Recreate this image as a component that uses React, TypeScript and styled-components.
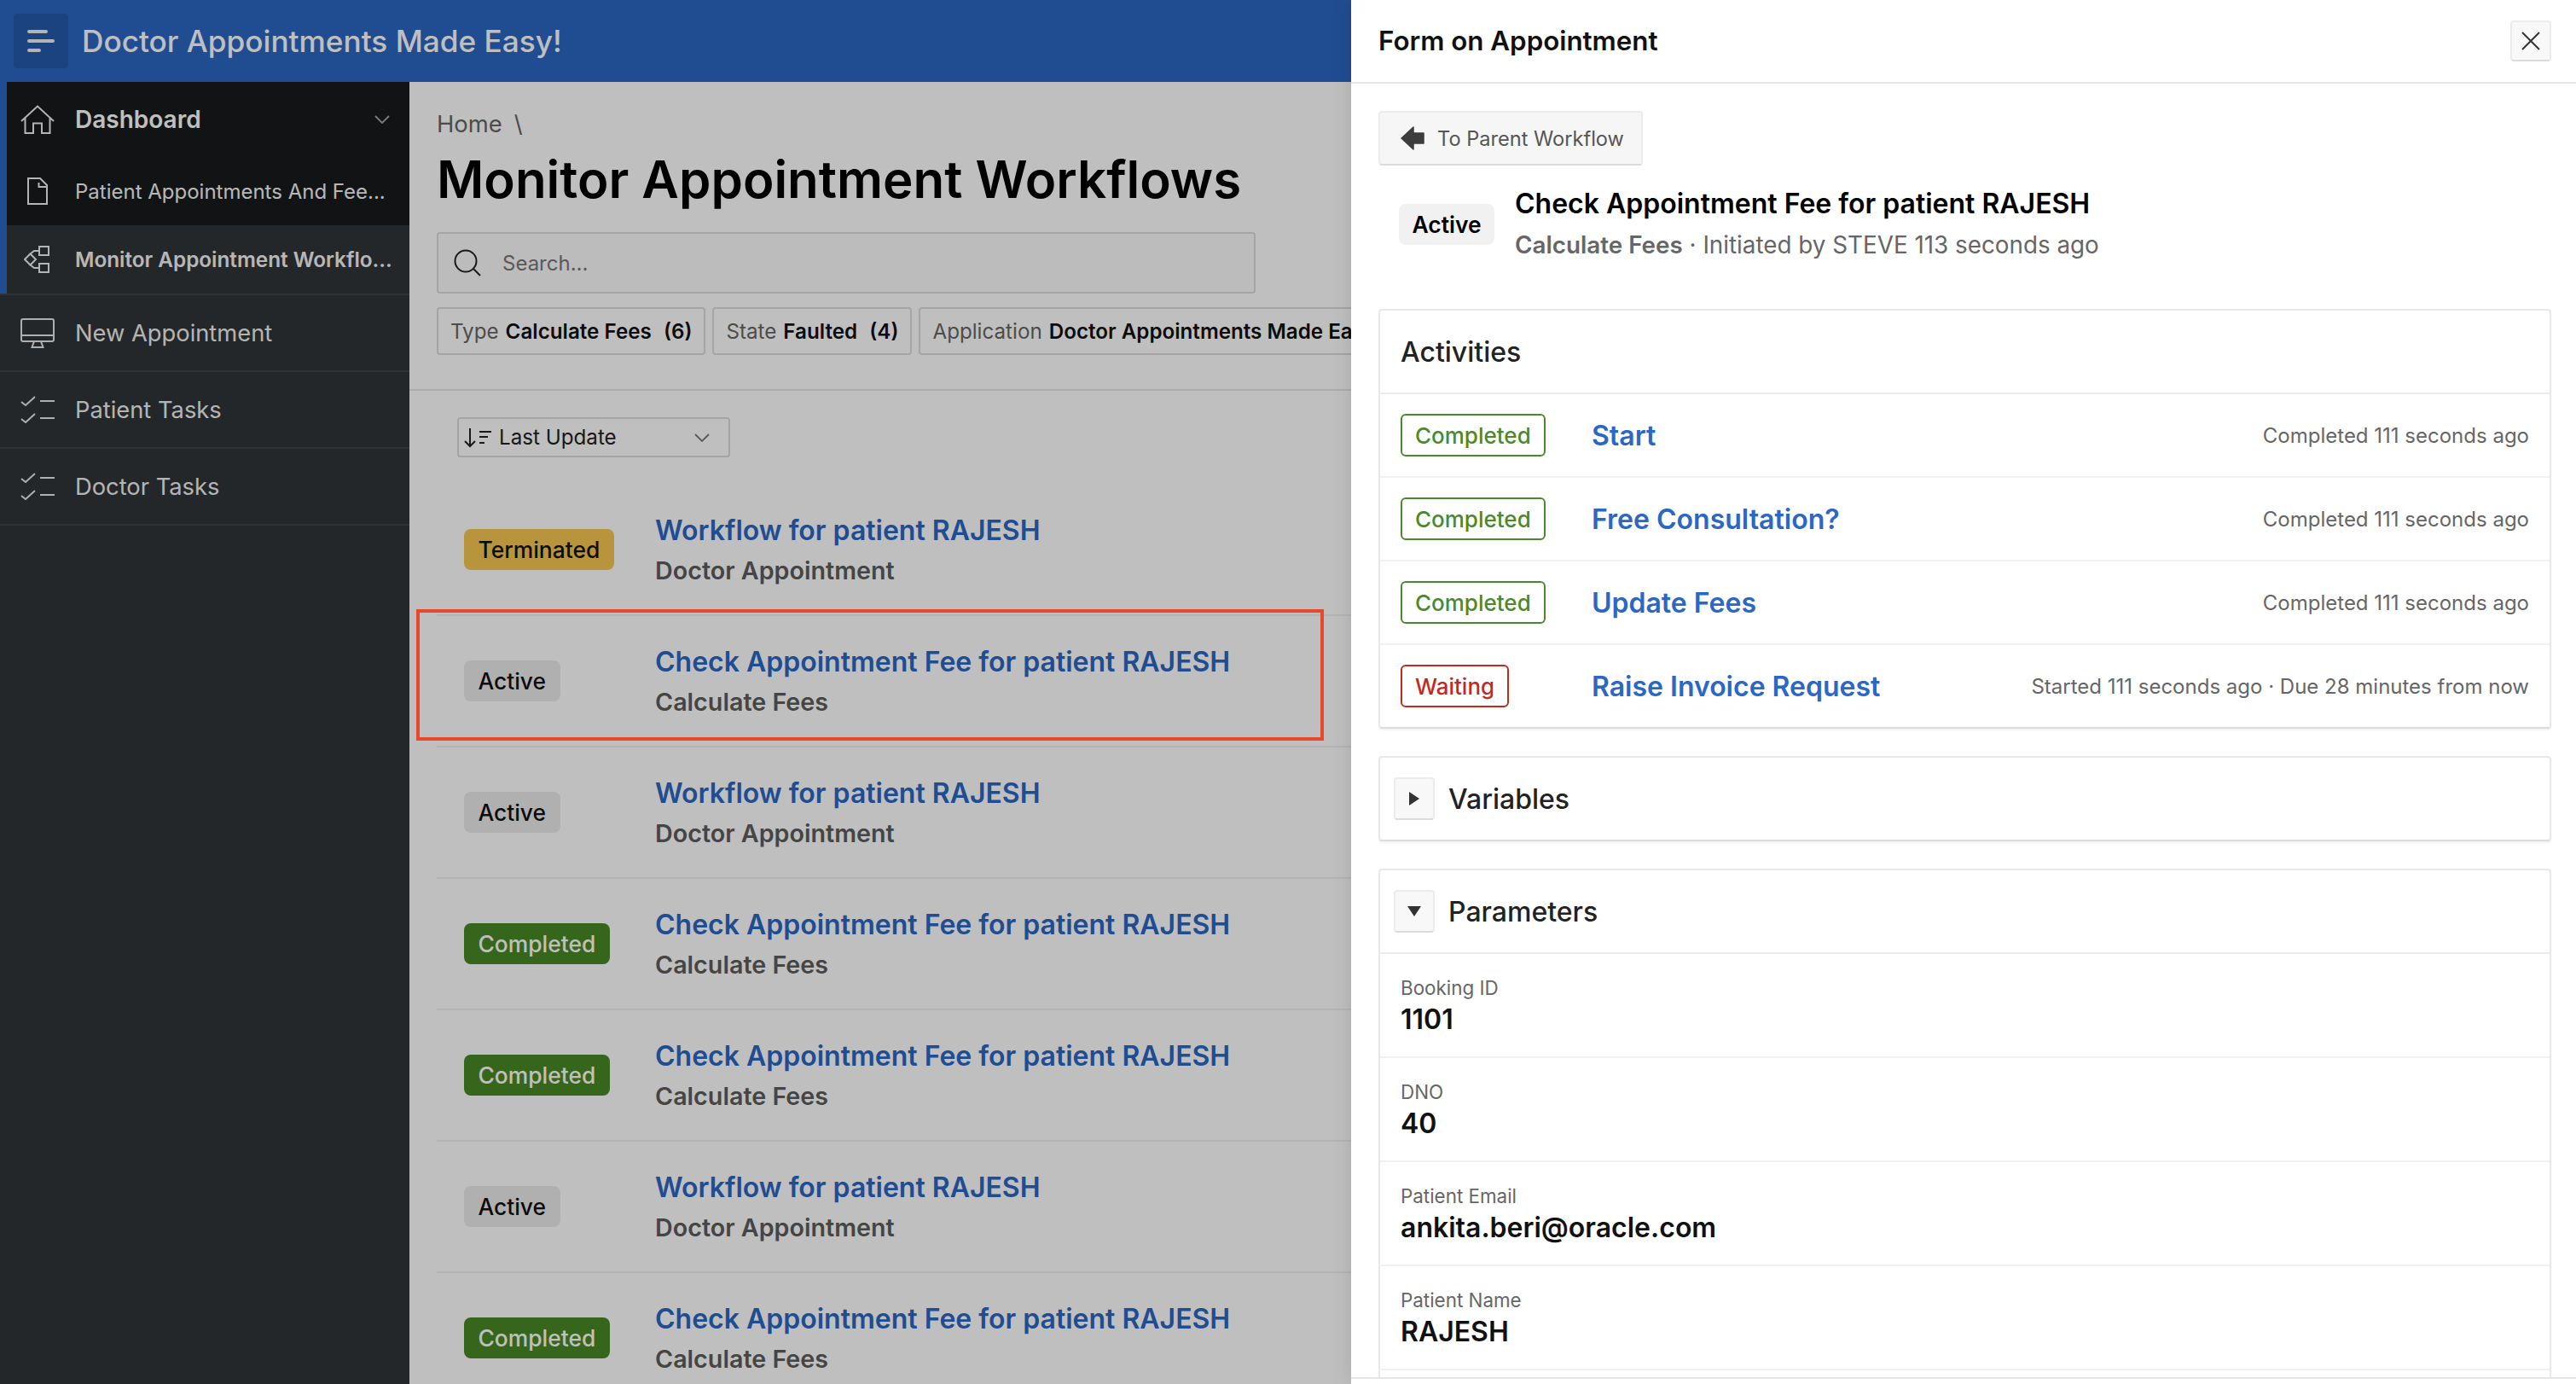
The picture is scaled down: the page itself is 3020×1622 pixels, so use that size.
import React from 'react'
import styled, { createGlobalStyle } from 'styled-components'

const GlobalStyle = createGlobalStyle`
  html, body {
    margin: 0;
    padding: 0;
    background: #fff;
    font-family: Inter, "Liberation Sans", sans-serif;
  }
  * { box-sizing: border-box; }
`

const Page = styled.div`
  position: relative;
  width: 3020px;
  height: 1622px;
  overflow: hidden;
  background: #fff;
  display: flex;
  flex-direction: column;
`
const TopBar = styled.header`
  height: 96px;
  flex: none;
  background: #2b67c3;
  display: flex;
  align-items: center;
  padding-left: 16px;
  gap: 16px;
`
const MenuButton = styled.div`
  width: 64px;
  height: 64px;
  border-radius: 4px;
  background: #255aab;
  display: flex;
  align-items: center;
  justify-content: center;
`
const AppTitle = styled.div`
  color: #fff;
  font-size: 35.2px;
  font-weight: 500;
`
const Body = styled.div`
  flex: 1;
  display: flex;
  min-height: 0;
`
const Sidebar = styled.nav`
  width: 480px;
  flex: none;
  background: #2f3438;
`
const NavGroup = styled.div`
  border-left: 8px solid #2b67c3;
`
const NavParent = styled.div`
  height: 88px;
  padding-right: 23px;
  background: #181a1d;
  display: flex;
  align-items: center;
  color: #fff;
  font-size: 28px;
  font-weight: 600;
`
const NavChild = styled.div<{ $current?: boolean }>`
  height: 80px;
  padding-right: 20px;
  background: ${(p) => (p.$current ? '#2f3438' : '#181a1d')};
  display: flex;
  align-items: center;
  color: #f5f5f5;
  font-size: ${(p) => (p.$current ? '24.3px' : '24px')};
  font-weight: ${(p) => (p.$current ? 600 : 400)};
`
const NavItem = styled.div`
  height: 90px;
  display: flex;
  align-items: center;
  border-top: 2px solid #3d4348;
  color: #f0f0f0;
  font-size: 27.3px;
  &:last-child { border-bottom: 2px solid #3d4348; height: 92px; }
`
const NavIcon = styled.span<{ $inset: number; $width: number }>`
  width: ${(p) => p.$width}px;
  flex: none;
  padding-left: ${(p) => p.$inset}px;
  display: flex;
  align-items: center;
`
const NavLabel = styled.span`
  flex: 1;
  white-space: nowrap;
`
const Main = styled.main`
  flex: 1;
  min-width: 0;
  background: #fff;
`
const PageHead = styled.div`
  height: 362px;
  padding: 32px 0 0 32px;
  border-bottom: 2px solid #e4e4e4;
`
const Crumb = styled.div`
  height: 34px;
  font-size: 27.4px;
  line-height: 34px;
  color: #666;
  display: flex;
  gap: 14px;
`
const PageTitle = styled.h1`
  margin: 10px 0 0;
  width: fit-content;
  white-space: nowrap;
  font-size: 60px;
  line-height: 76px;
  font-weight: 600;
  color: #000;
`
const SearchBox = styled.div`
  margin-top: 24px;
  width: 960px;
  height: 72px;
  border: 2px solid #dcdcdc;
  border-radius: 4px;
  background: #fbfbfb;
  display: flex;
  align-items: center;
  gap: 25px;
  padding-left: 18px;
  color: #777;
  font-size: 24px;
`
const ChipRow = styled.div`
  margin-top: 16px;
  display: flex;
  gap: 8px;
  white-space: nowrap;
`
const Chip = styled.div`
  height: 56px;
  padding: 0 14px;
  border: 2px solid #dcdcdc;
  border-radius: 4px;
  display: flex;
  align-items: center;
  gap: 8px;
  font-size: 24.2px;
  color: #666;
  b { font-weight: 600; color: #111; }
`
const ListArea = styled.div`
  padding: 31px 0 0 32px;
`
const SortSelect = styled.div`
  margin-left: 24px;
  width: 320px;
  height: 47px;
  border: 2px solid #dcdcdc;
  border-radius: 4px;
  padding: 0 22px 0 6px;
  display: flex;
  align-items: center;
  gap: 9px;
  font-size: 24.2px;
  color: #222;
  span { flex: 1; }
`
const List = styled.div`
  margin-top: 32px;
`
const FlowRow = styled.div`
  height: 154px;
  border-bottom: 2px solid #f0f0f0;
  display: flex;
  align-items: center;
  padding-left: 32px;
`
const BadgeSlot = styled.div`
  width: 224px;
  flex: none;
`
const Badge = styled.span<{ $kind: string }>`
  display: inline-flex;
  align-items: center;
  height: 48px;
  padding: 0 16.5px;
  border-radius: 8px;
  font-size: 26.4px;
  font-weight: 500;
  background: ${(p) =>
    p.$kind === 'Terminated' ? '#f6c650' : p.$kind === 'Completed' ? '#488926' : '#ebebeb'};
  color: ${(p) => (p.$kind === 'Completed' ? '#fff' : '#111')};
`
const SummaryBadge = styled(Badge)`
  font-weight: 600;
  padding: 0 15.5px;
  background: #f1f1f1;
  color: #000;
`
const FlowTitle = styled.div`
  font-size: 32px;
  line-height: 40px;
  font-weight: 600;
  color: #2b67c3;
`
const FlowSub = styled.div`
  margin-top: 9px;
  font-size: 28.7px;
  line-height: 36px;
  font-weight: 600;
  color: #5c5c5c;
`
const Overlay = styled.div`
  position: absolute;
  inset: 0;
  background: rgba(0, 0, 0, 0.25);
`
const Callout = styled.div`
  position: absolute;
  left: 488px;
  top: 714px;
  width: 1064px;
  height: 154px;
  border: 4px solid #e8472c;
`
const Drawer = styled.aside`
  position: absolute;
  top: 0;
  right: 0;
  bottom: 0;
  width: 1436px;
  background: #fff;
  box-shadow: 0 0 24px rgba(0, 0, 0, 0.12);
  display: flex;
  flex-direction: column;
`
const DrawerHead = styled.div`
  height: 98px;
  flex: none;
  border-bottom: 2px solid #e6e6e6;
  padding: 0 29px 0 32px;
  display: flex;
  align-items: center;
  justify-content: space-between;
  font-size: 31.3px;
  font-weight: 600;
  color: #111;
`
const CloseButton = styled.div`
  width: 48px;
  height: 48px;
  border: 2px solid #ececec;
  border-bottom-color: #dcdcdc;
  border-radius: 4px;
  background: #f8f8f8;
  display: flex;
  align-items: center;
  justify-content: center;
`
const DrawerBody = styled.div`
  flex: 1;
  min-height: 0;
  overflow: hidden;
  padding: 32px 29px 0 32px;
`
const DrawerFoot = styled.div`
  height: 8px;
  flex: none;
  background: #fff;
  border-top: 2px solid #e6e6e6;
`
const BackButton = styled.div`
  width: 310px;
  height: 64px;
  border: 2px solid #ececec;
  border-bottom-color: #dcdcdc;
  border-radius: 4px;
  background: #f6f6f6;
  display: flex;
  align-items: center;
  gap: 15px;
  padding-left: 24px;
  font-size: 23.6px;
  color: #555;
`
const Summary = styled.div`
  margin-top: 23px;
  padding-left: 24px;
  display: flex;
  align-items: center;
  gap: 24px;
`
const SummaryTitle = styled.div`
  font-size: 32px;
  line-height: 44px;
  font-weight: 600;
  color: #000;
`
const SummarySub = styled.div`
  margin-top: 4px;
  font-size: 27.8px;
  line-height: 44px;
  color: #666;
  b { font-weight: 600; }
`
const Card = styled.section`
  border: 2px solid #e8e8e8;
  border-bottom-color: #dcdcdc;
  border-radius: 4px;
  box-shadow: 0 2px 2px rgba(0, 0, 0, 0.05);
`
const ActivitiesCard = styled(Card)`
  margin-top: 53px;
`
const PlainCard = styled(Card)`
  margin-top: 32px;
`
const CardTitle = styled.div`
  height: 98px;
  border-bottom: 2px solid #ececec;
  padding: 0 24px;
  display: flex;
  align-items: center;
  font-size: 32px;
  font-weight: 500;
  color: #222;
`
const ActivityRow = styled.div`
  height: 98px;
  padding: 0 24px;
  display: flex;
  align-items: center;
  border-bottom: 2px solid #f2f2f2;
  &:last-child { border-bottom: 0; height: 96px; }
`
const ActivityBadgeSlot = styled.div`
  width: 224px;
  flex: none;
`
const OutlineBadge = styled.span<{ $tone: string }>`
  display: inline-flex;
  align-items: center;
  height: 50px;
  padding: 0 15px;
  border-radius: 6px;
  border: 2px solid ${(p) => p.$tone};
  color: ${(p) => p.$tone};
  font-size: 26px;
  font-weight: 500;
`
const ActivityName = styled.div`
  flex: 1;
  font-size: 32px;
  font-weight: 600;
  color: #2b67c3;
`
const ActivityMeta = styled.div`
  font-size: 24px;
  color: #666;
`
const ToggleHead = styled.div<{ $open?: boolean }>`
  height: ${(p) => (p.$open ? '98px' : '96px')};
  padding-left: 16px;
  display: flex;
  align-items: center;
  gap: 16px;
  font-size: 32px;
  font-weight: 500;
  color: #222;
  border-bottom: ${(p) => (p.$open ? '2px solid #ececec' : '0')};
`
const ToggleButton = styled.div`
  width: 48px;
  height: 50px;
  border: 2px solid #ececec;
  border-bottom-color: #dcdcdc;
  border-radius: 4px;
  background: #f8f8f8;
  display: flex;
  align-items: center;
  justify-content: center;
`
const ParamRow = styled.div`
  height: 122px;
  padding: 26px 24px 0;
  border-bottom: 2px solid #f0f0f0;
`
const ParamLabel = styled.div`
  font-size: 22.4px;
  line-height: 28px;
  color: #666;
`
const ParamValue = styled.div`
  margin-top: 2px;
  font-size: 32px;
  line-height: 42px;
  font-weight: 600;
  color: #111;
`

const Glyph = styled.svg`
  display: block;
  flex: none;
`

const MenuIcon = () => (
  <Glyph width="32" height="26" viewBox="0 0 32 26" fill="#f0f0f0">
    <rect x="0" y="0" width="24" height="4" rx="2" />
    <rect x="0" y="11" width="32" height="4" rx="2" />
    <rect x="0" y="22" width="16" height="4" rx="2" />
  </Glyph>
)
const HomeIcon = () => (
  <Glyph width="40" height="34" viewBox="0 0 40 34" fill="none" stroke="#f0f0f0" strokeWidth="2">
    <path d="M1 19 20 1.5 39 19M5.5 15v18h9.5V21.500h10V33h9.500V15" />
  </Glyph>
)
const Chevron = ({ color = '#a5a5a5' }: { color?: string }) => (
  <Glyph width="18" height="10" viewBox="0 0 18 10" fill="none" stroke={color} strokeWidth="1.8">
    <path d="M1 1l8 8 8-8" />
  </Glyph>
)
const FileIcon = () => (
  <Glyph width="24" height="32" viewBox="0 0 24 32" fill="none" stroke="#f0f0f0" strokeWidth="2">
    <path d="M1 1h14l8 8v22H1zM13.500 6v5H22" />
  </Glyph>
)
const WorkflowIcon = () => (
  <Glyph width="30" height="32" viewBox="0 0 30 32" fill="none" stroke="#f0f0f0" strokeWidth="2">
    <path d="M7.500 9.500 14 16l-6.500 6.500L1 16zM18 1h11v10H18zM18 21h11v10H18zM7.500 9.500 12 6h6M7.500 22.500 12 26h6" />
  </Glyph>
)
const MonitorIcon = () => (
  <Glyph width="40" height="35" viewBox="0 0 40 35" fill="none" stroke="#eaeaea" strokeWidth="2">
    <rect x="1" y="1" width="38" height="26" rx="2" />
    <path d="M1 20h38M16 27l-2.500 7h13L24 27" />
  </Glyph>
)
const TasksIcon = () => (
  <Glyph width="40" height="32" viewBox="0 0 40 32" fill="none" stroke="#eaeaea" strokeWidth="2">
    <path d="M1 7l5 4L17 1M1 27l5 4 11-10M23 6h17M23 26h17" />
  </Glyph>
)
const SearchIcon = () => (
  <Glyph width="32" height="32" viewBox="0 0 32 32" fill="none" stroke="#222" strokeWidth="2">
    <circle cx="14" cy="14" r="12.500" />
    <path d="M23 23l8 8" />
  </Glyph>
)
const SortIcon = () => (
  <Glyph width="32" height="24" viewBox="0 0 32 24" fill="none" stroke="#222" strokeWidth="2">
    <path d="M7 1v21M1 16l6 6 6-6M18 5h14M18 11h10M18 18h6" />
  </Glyph>
)
const CloseIcon = () => (
  <Glyph width="22" height="22" viewBox="0 0 22 22" fill="none" stroke="#333" strokeWidth="2">
    <path d="M1 1l20 20M21 1L1 21" />
  </Glyph>
)
const BackArrow = () => (
  <Glyph width="28" height="28" viewBox="0 0 28 28" fill="#3d3d3d" stroke="#3d3d3d" strokeWidth="1.5" strokeLinejoin="round">
    <path d="M15 1 1 14l14 13v-7h12V8H15z" />
  </Glyph>
)
const TriRight = () => (
  <Glyph width="12" height="16" viewBox="0 0 12 16" fill="#333">
    <path d="M0 0l12 8-12 8z" />
  </Glyph>
)
const TriDown = () => (
  <Glyph width="16" height="12" viewBox="0 0 16 12" fill="#333">
    <path d="M0 0h16L8 12z" />
  </Glyph>
)

const flows = [
  { state: 'Terminated', title: 'Workflow for patient RAJESH', sub: 'Doctor Appointment' },
  { state: 'Active', title: 'Check Appointment Fee for patient RAJESH', sub: 'Calculate Fees' },
  { state: 'Active', title: 'Workflow for patient RAJESH', sub: 'Doctor Appointment' },
  { state: 'Completed', title: 'Check Appointment Fee for patient RAJESH', sub: 'Calculate Fees' },
  { state: 'Completed', title: 'Check Appointment Fee for patient RAJESH', sub: 'Calculate Fees' },
  { state: 'Active', title: 'Workflow for patient RAJESH', sub: 'Doctor Appointment' },
  { state: 'Completed', title: 'Check Appointment Fee for patient RAJESH', sub: 'Calculate Fees' },
]

const activities = [
  { state: 'Completed', tone: '#4a8a2a', name: 'Start', meta: 'Completed 111 seconds ago' },
  { state: 'Completed', tone: '#4a8a2a', name: 'Free Consultation?', meta: 'Completed 111 seconds ago' },
  { state: 'Completed', tone: '#4a8a2a', name: 'Update Fees', meta: 'Completed 111 seconds ago' },
  { state: 'Waiting', tone: '#c4291c', name: 'Raise Invoice Request', meta: 'Started 111 seconds ago · Due 28 minutes from now' },
]

const params = [
  { label: 'Booking ID', value: '1101' },
  { label: 'DNO', value: '40' },
  { label: 'Patient Email', value: 'ankita.beri@oracle.com' },
  { label: 'Patient Name', value: 'RAJESH' },
]

export default function App() {
  return (
    <Page>
      <GlobalStyle />
      <TopBar>
        <MenuButton>
          <MenuIcon />
        </MenuButton>
        <AppTitle>Doctor Appointments Made Easy!</AppTitle>
      </TopBar>
      <Body>
        <Sidebar>
          <NavGroup>
            <NavParent>
              <NavIcon $inset={16} $width={80}>
                <HomeIcon />
              </NavIcon>
              <NavLabel>Dashboard</NavLabel>
              <Chevron />
            </NavParent>
            <NavChild>
              <NavIcon $inset={24} $width={80}>
                <FileIcon />
              </NavIcon>
              <NavLabel>Patient Appointments And Fee...</NavLabel>
            </NavChild>
            <NavChild $current>
              <NavIcon $inset={20} $width={80}>
                <WorkflowIcon />
              </NavIcon>
              <NavLabel>Monitor Appointment Workflo...</NavLabel>
            </NavChild>
          </NavGroup>
          <NavItem>
            <NavIcon $inset={24} $width={88}>
              <MonitorIcon />
            </NavIcon>
            <NavLabel>New Appointment</NavLabel>
          </NavItem>
          <NavItem>
            <NavIcon $inset={24} $width={88}>
              <TasksIcon />
            </NavIcon>
            <NavLabel>Patient Tasks</NavLabel>
          </NavItem>
          <NavItem>
            <NavIcon $inset={24} $width={88}>
              <TasksIcon />
            </NavIcon>
            <NavLabel>Doctor Tasks</NavLabel>
          </NavItem>
        </Sidebar>
        <Main>
          <PageHead>
            <Crumb>
              <span>Home</span>
              <span>\</span>
            </Crumb>
            <PageTitle>Monitor Appointment Workflows</PageTitle>
            <SearchBox>
              <SearchIcon />
              Search...
            </SearchBox>
            <ChipRow>
              <Chip>
                Type <b>Calculate Fees</b> <b>&nbsp;(6)</b>
              </Chip>
              <Chip>
                State <b>Faulted</b> <b>&nbsp;(4)</b>
              </Chip>
              <Chip>
                Application <b>Doctor Appointments Made Easy!</b> <b>&nbsp;(10)</b>
              </Chip>
            </ChipRow>
          </PageHead>
          <ListArea>
            <SortSelect>
              <SortIcon />
              <span>Last Update</span>
              <Chevron color="#777" />
            </SortSelect>
            <List>
              {flows.map((flow, i) => (
                <FlowRow key={i}>
                  <BadgeSlot>
                    <Badge $kind={flow.state}>{flow.state}</Badge>
                  </BadgeSlot>
                  <div>
                    <FlowTitle>{flow.title}</FlowTitle>
                    <FlowSub>{flow.sub}</FlowSub>
                  </div>
                </FlowRow>
              ))}
            </List>
          </ListArea>
        </Main>
      </Body>
      <Overlay />
      <Callout />
      <Drawer>
        <DrawerHead>
          Form on Appointment
          <CloseButton>
            <CloseIcon />
          </CloseButton>
        </DrawerHead>
        <DrawerBody>
          <BackButton>
            <BackArrow />
            To Parent Workflow
          </BackButton>
          <Summary>
            <SummaryBadge $kind="Active">Active</SummaryBadge>
            <div>
              <SummaryTitle>Check Appointment Fee for patient RAJESH</SummaryTitle>
              <SummarySub>
                <b>Calculate Fees</b> · Initiated by STEVE 113 seconds ago
              </SummarySub>
            </div>
          </Summary>
          <ActivitiesCard>
            <CardTitle>Activities</CardTitle>
            {activities.map((a) => (
              <ActivityRow key={a.name}>
                <ActivityBadgeSlot>
                  <OutlineBadge $tone={a.tone}>{a.state}</OutlineBadge>
                </ActivityBadgeSlot>
                <ActivityName>{a.name}</ActivityName>
                <ActivityMeta>{a.meta}</ActivityMeta>
              </ActivityRow>
            ))}
          </ActivitiesCard>
          <PlainCard>
            <ToggleHead>
              <ToggleButton>
                <TriRight />
              </ToggleButton>
              Variables
            </ToggleHead>
          </PlainCard>
          <PlainCard>
            <ToggleHead $open>
              <ToggleButton>
                <TriDown />
              </ToggleButton>
              Parameters
            </ToggleHead>
            {params.map((p) => (
              <ParamRow key={p.label}>
                <ParamLabel>{p.label}</ParamLabel>
                <ParamValue>{p.value}</ParamValue>
              </ParamRow>
            ))}
            <ParamRow />
          </PlainCard>
        </DrawerBody>
        <DrawerFoot />
      </Drawer>
    </Page>
  )
}
